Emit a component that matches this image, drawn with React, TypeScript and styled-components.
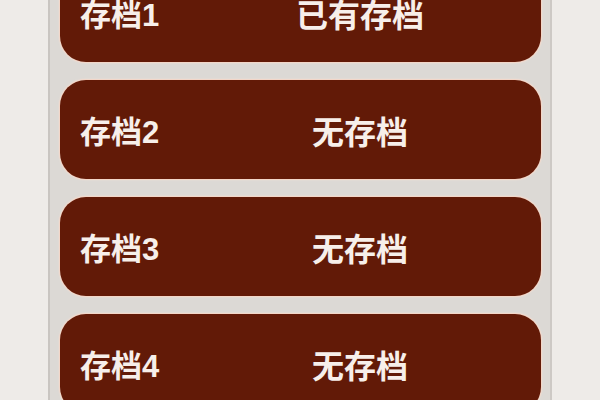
import React from "react";
import styled, { createGlobalStyle } from "styled-components";

const GlobalStyle = createGlobalStyle`
	html, body {
		margin: 0;
		padding: 0;
		background: #eeebe8;
		overflow: hidden;
	}
`;

const slots = [
	{ name: "存档1", status: "已有存档" },
	{ name: "存档2", status: "无存档" },
	{ name: "存档3", status: "无存档" },
	{ name: "存档4", status: "无存档" },
];

const App = () => {
	return (
		<>
			<GlobalStyle />
			<Page>
				<Panel>
					<List>
						{slots.map((s) => (
							<SlotCard key={s.name}>
								<SlotName>{s.name}</SlotName>
								<SlotStatus>{s.status}</SlotStatus>
							</SlotCard>
						))}
					</List>
				</Panel>
			</Page>
		</>
	);
};

const Page = styled.div`
	width: 600px;
	height: 400px;
	display: flex;
	justify-content: center;
	background: #eeebe8;
	overflow: hidden;
`;

const Panel = styled.div`
	width: 504px;
	height: 400px;
	box-sizing: border-box;
	background: #dcd9d5;
	border-left: 2px solid #c9c5c1;
	border-right: 2px solid #cdc9c5;
	padding: 0 9px 0 10px;
	overflow: hidden;
`;

const List = styled.div`
	display: flex;
	flex-direction: column;
	gap: 18px;
	margin-top: -37px;
`;

const SlotCard = styled.div`
	height: 99px;
	flex-shrink: 0;
	box-sizing: border-box;
	display: flex;
	align-items: center;
	padding-left: 20px;
	background: #621a07;
	border-radius: 26px;
	box-shadow: 0 0 0 1px #f3d6c8, 0 0 2px 1px rgba(255, 230, 215, 0.6);
	color: #f7efea;
	font-family: "Liberation Sans", "Noto Sans CJK SC", sans-serif;
	font-weight: 700;
	font-size: 31px;
`;

const SlotName = styled.div`
	width: 152px;
`;

const SlotStatus = styled.div`
	width: 256px;
	text-align: center;
	font-size: 32px;
`;

export default App;
